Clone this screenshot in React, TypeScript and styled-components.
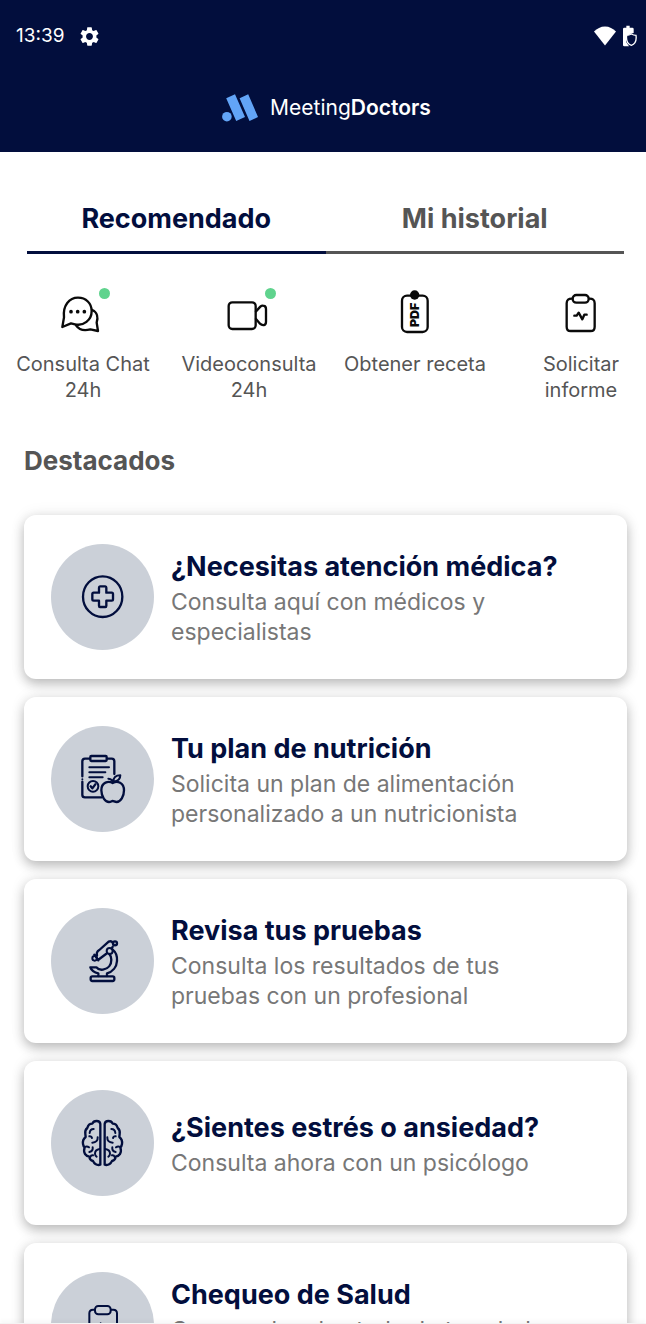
import React from "react";
import styled, { createGlobalStyle } from "styled-components";
import { MdSettings } from "react-icons/md";

const NAVY = "#020e3d";
const GREY = "#555555";

const GlobalStyle = createGlobalStyle`
  *, *::before, *::after { box-sizing: border-box; }
  body {
    margin: 0;
    background: #ffffff;
    font-family: Inter, "Open Sans", sans-serif;
  }
  button { font: inherit; }
`;

const Screen = styled.div`
  display: flex;
  flex-direction: column;
  height: 100vh;
  overflow: hidden;
`;

const Header = styled.header`
  flex: none;
  padding: 20px 9px 28px 16px;
  background: ${NAVY};
  color: #ffffff;
`;

const StatusBar = styled.div`
  display: flex;
  align-items: center;
  justify-content: space-between;
  height: 32px;
  font-size: 19px;
  line-height: 32px;
`;

const StatusGroup = styled.div<{ $gap: number }>`
  display: flex;
  align-items: center;
  gap: ${(p) => p.$gap}px;
`;

const Brand = styled.div`
  display: flex;
  align-items: center;
  justify-content: center;
  gap: 12px;
  margin-top: 40px;
  height: 32px;
  font-size: 21px;
  font-weight: 400;
  line-height: 32px;

  strong { font-weight: 600; }
`;

const Content = styled.main`
  flex: 1;
  min-height: 0;
  overflow-y: auto;
  scrollbar-width: none;
`;

const Tabs = styled.div`
  display: flex;
  margin: 52px 22px 0 27px;
`;

const Tab = styled.button<{ $active?: boolean }>`
  flex: 1;
  padding: 0 0 17px;
  border: 0;
  border-bottom: 3px solid ${(p) => (p.$active ? NAVY : GREY)};
  background: none;
  color: ${(p) => (p.$active ? NAVY : GREY)};
  font-size: 27px;
  font-weight: 700;
  line-height: 30px;
  cursor: pointer;
`;

const Actions = styled.nav`
  display: flex;
  margin-top: 34px;
  overflow-x: auto;
  scrollbar-width: none;
`;

const Action = styled.button`
  flex: 0 0 166px;
  display: flex;
  flex-direction: column;
  align-items: center;
  gap: 15px;
  padding: 0 8px;
  border: 0;
  background: none;
  color: ${GREY};
  font-size: 20px;
  line-height: 26px;
  cursor: pointer;
`;

const ActionIcon = styled.span`
  position: relative;
  width: 44px;
  height: 48px;

  svg { display: block; }
`;

const OnlineDot = styled.span`
  position: absolute;
  top: 0;
  right: -5px;
  width: 11px;
  height: 11px;
  border-radius: 50%;
  background: #5fd38d;
`;

const SectionTitle = styled.h2`
  margin: 42px 24px 0;
  color: ${GREY};
  font-size: 26px;
  font-weight: 700;
  line-height: 32px;
`;

const CardList = styled.div`
  display: flex;
  flex-direction: column;
  gap: 18px;
  padding: 38px 19px 24px 24px;
`;

const Card = styled.button`
  display: flex;
  align-items: center;
  gap: 17px;
  padding: 29px 27px;
  border: 0;
  border-radius: 12px;
  background: #ffffff;
  box-shadow: 0 5px 12px rgba(0, 0, 0, 0.24), 0 0 16px rgba(0, 0, 0, 0.08);
  text-align: left;
  cursor: pointer;
`;

const CardIcon = styled.span`
  flex: none;
  display: flex;
  align-items: center;
  justify-content: center;
  width: 103px;
  height: 106px;
  border-radius: 50%;
  background: #cbd0d8;
`;

const CardText = styled.span`
  display: flex;
  flex-direction: column;
  min-width: 0;
`;

const CardTitle = styled.span`
  color: ${NAVY};
  font-size: 27px;
  font-weight: 700;
  line-height: 40px;
`;

const CardDescription = styled.span`
  max-width: 380px;
  color: #777777;
  font-size: 23px;
  line-height: 30px;
`;

const BottomEdge = styled.footer`
  position: relative;
  flex: none;
  height: 1px;
  background: #f4f4f4;
  box-shadow: 0 -1px 4px rgba(0, 0, 0, 0.14);
`;

type DrawingProps = { view: string; children: React.ReactNode };

const ActionDrawing = ({ view, children }: DrawingProps) => (
  <svg width="44" height="48" viewBox={view} fill="none" stroke="#0a0a0a" strokeWidth="7" strokeLinecap="round" strokeLinejoin="round" aria-hidden="true">
    {children}
  </svg>
);

const CardDrawing = ({ view, children }: DrawingProps) => (
  <svg width="48" height="52" viewBox={view} fill="none" stroke={NAVY} strokeWidth="7" strokeLinecap="round" strokeLinejoin="round" aria-hidden="true">
    {children}
  </svg>
);

const Logo = () => (
  <svg width="36" height="28" viewBox="221 93 36 28" fill="#62a4f7" aria-hidden="true">
    <circle cx="225.9" cy="115.7" r="4.8" />
    <path d="M225.2 97.3 234 93.3 244 116 235.2 120ZM238.6 97.3 247.2 93.3 257 116 248.5 120Z" />
  </svg>
);

const Wifi = () => (
  <svg width="22" height="20" viewBox="0 0 22 20" fill="#ffffff" aria-hidden="true">
    <path d="M11 19.6 0 5.6C3 2.4 6.700 .4 11 .4s8 2 11 5.200Z" />
  </svg>
);

const Battery = () => (
  <svg width="14" height="22" viewBox="0 0 42 66" aria-hidden="true">
    <path fill="#ffffff" d="M10 2h10v6h8q4 0 4 4v12l-9 2-14 9v15l9 14H4q-4 0-4-4V12q0-4 4-4h6Z" />
    <path fill={NAVY} stroke="#ffffff" strokeWidth="4" d="M25 27q7 4 14 4c2 15-1 26-14 30-13-4-16-15-14-30q7 0 14-4Z" />
  </svg>
);

const ChatDrawing = () => (
  <ActionDrawing view="183 324 132 144">
    <path d="M192 412C188 376 208 353 234 353c24 0 41 17 41 40 0 28-25 46-50 40l-12-3-26 11Z" />
    <path d="M277 390c15 7 18 23 13 38l4 25-23-5c-18 5-34 1-43-12" />
    <path strokeWidth="11" d="M213 395h.1M233 395h.1M253 395h.1" />
  </ActionDrawing>
);

const VideoDrawing = () => (
  <ActionDrawing view="681 324 132 144">
    <rect x="686" y="367" width="81" height="80" rx="11" />
    <path d="M768 394 781 380c4-4 8-4 12-2 4 1 5 5 5 10v37c0 5-2 9-6 10-5 1-8 0-12-4l-12-14" />
  </ActionDrawing>
);

const PdfDrawing = () => (
  <ActionDrawing view="210 324 132 144">
    <rect x="237" y="347" width="77" height="109" rx="15" />
    <circle cx="275" cy="345" r="14" fill="#0a0a0a" stroke="none" />
    <text transform="translate(289 441) rotate(-90)" fill="#0a0a0a" stroke="none" fontFamily="Inter, sans-serif" fontWeight="900" fontSize="37">PDF</text>
  </ActionDrawing>
);

const ReportDrawing = () => (
  <ActionDrawing view="708 324 132 144">
    <path d="M748 356q-17-1-17 14v70q0 13 12 13h60q12 0 12-13v-70q0-15-17-14" />
    <rect x="749" y="345" width="48" height="23" rx="11" />
    <path d="M754 407h7l6-9 11 20 6-14h7" />
  </ActionDrawing>
);

const CareDrawing = () => (
  <CardDrawing view="236 422 144 156">
    <ellipse cx="307" cy="499" rx="59" ry="61" />
    <path d="M299 468h16q3 0 3 4v15h16q4 0 4 4v16q0 4-4 4h-16v15q0 4-3 4h-16q-3 0-3-4v-15h-16q-4 0-4-4v-16q0-4 4-4h16v-15q0-4 3-4Z" />
  </CardDrawing>
);

const NutritionDrawing = () => (
  <CardDrawing view="117 102 144 156">
    <path d="M149 119h-14q-8 0-8 8v45M127 188v40q0 7 8 7h50M202 119h13q8 0 8 8v38" />
    <rect x="151" y="111" width="49" height="15" rx="3" />
    <path strokeWidth="6" d="M148 145h59M148 160h48M148 175h40M127 181h.1" />
    <circle cx="159" cy="202" r="16" strokeWidth="6" />
    <path d="m152 202 5 6 9-12" />
    <path d="M218 192c-12-7-34-3-34 22 0 19 12 35 23 35 6 0 7-3 11-3s6 3 12 3c12 0 22-17 22-35 0-24-20-30-34-22Z" />
    <path strokeWidth="6" d="M218 190c0-5-5-10-13-11M221 188c-2-12 6-19 20-19 0 10-6 18-20 19Z" />
  </CardDrawing>
);

const MicroscopeDrawing = () => (
  <CardDrawing view="117 109 144 156">
    <rect x="152" y="233" width="71" height="14" rx="5" />
    <path strokeWidth="7" d="M175 232v-8q-19-4-24-18h18q7 9 20 7c17-3 25-16 25-30q0-10-6-17M218 153c11 9 14 22 13 34-1 18-13 32-30 37v8" />
    <path strokeWidth="7" d="M171 170q-3-10 7-16l28-25q8-4 12 3M174 184l24-18M218 144l-3 6M163 168l12 17" />
    <circle cx="209" cy="157" r="9" strokeWidth="6" />
    <circle cx="164" cy="179" r="7" strokeWidth="6" />
    <circle cx="225" cy="134" r="6" />
  </CardDrawing>
);

const BrainHalf = () => (
  <>
    <path d="M181 256V134q-1-9-11-9-10 0-13 8-12 0-15 13-8 6-6 18l1 9q-10 8-8 21 1 7 5 10-4 11 1 20 5 7 13 8 1 11 11 13 6 12 17 12Z" />
    <path strokeWidth="6" d="M161 149q-11 0-12 12M148 171q7-1 8 5M173 174q1 15-16 16M134 203q7-4 13 1M158 204q2 11-10 14M179 209q-14 2-14 14 0 5 5 9M151 233q2-6 8-5" />
  </>
);

const BrainDrawing = () => (
  <CardDrawing view="117 113 144 156">
    <BrainHalf />
    <g transform="translate(375 0) scale(-1 1)">
      <BrainHalf />
    </g>
  </CardDrawing>
);

const CheckupDrawing = () => (
  <CardDrawing view="236 234 144 156">
    <path strokeWidth="6" d="M284 266h-6q-11 0-11 11v76q0 12 12 12h59q12 0 12-12v-76q0-11-11-11h-6" />
    <rect x="284" y="255" width="47" height="25" rx="10" strokeWidth="6" />
    <path strokeWidth="6" d="M286 322h8l7-15 11 28 8-18h12" />
  </CardDrawing>
);

const actions = [
  { label: "Consulta Chat 24h", drawing: <ChatDrawing />, online: true },
  { label: "Videoconsulta 24h", drawing: <VideoDrawing />, online: true },
  { label: "Obtener receta", drawing: <PdfDrawing />, online: false },
  { label: "Solicitar informe", drawing: <ReportDrawing />, online: false },
];

const cards = [
  { title: "¿Necesitas atención médica?", text: "Consulta aquí con médicos y especialistas", drawing: <CareDrawing /> },
  { title: "Tu plan de nutrición", text: "Solicita un plan de alimentación personalizado a un nutricionista", drawing: <NutritionDrawing /> },
  { title: "Revisa tus pruebas", text: "Consulta los resultados de tus pruebas con un profesional", drawing: <MicroscopeDrawing /> },
  { title: "¿Sientes estrés o ansiedad?", text: "Consulta ahora con un psicólogo", drawing: <BrainDrawing /> },
  { title: "Chequeo de Salud", text: "Comprueba el estado de tu salud respondiendo a un test", drawing: <CheckupDrawing /> },
];

export default function App() {
  return (
    <Screen>
      <GlobalStyle />
      <Header>
        <StatusBar>
          <StatusGroup $gap={14}>
            <span>13:39</span>
            <MdSettings size={23} />
          </StatusGroup>
          <StatusGroup $gap={7}>
            <Wifi />
            <Battery />
          </StatusGroup>
        </StatusBar>
        <Brand>
          <Logo />
          <span>Meeting<strong>Doctors</strong></span>
        </Brand>
      </Header>
      <Content>
        <Tabs role="tablist">
          <Tab role="tab" aria-selected="true" $active>Recomendado</Tab>
          <Tab role="tab" aria-selected="false">Mi historial</Tab>
        </Tabs>
        <Actions>
          {actions.map((a) => (
            <Action key={a.label}>
              <ActionIcon>
                {a.drawing}
                {a.online && <OnlineDot />}
              </ActionIcon>
              <span>{a.label}</span>
            </Action>
          ))}
        </Actions>
        <SectionTitle>Destacados</SectionTitle>
        <CardList>
          {cards.map((c) => (
            <Card key={c.title}>
              <CardIcon>{c.drawing}</CardIcon>
              <CardText>
                <CardTitle>{c.title}</CardTitle>
                <CardDescription>{c.text}</CardDescription>
              </CardText>
            </Card>
          ))}
        </CardList>
      </Content>
      <BottomEdge />
    </Screen>
  );
}
